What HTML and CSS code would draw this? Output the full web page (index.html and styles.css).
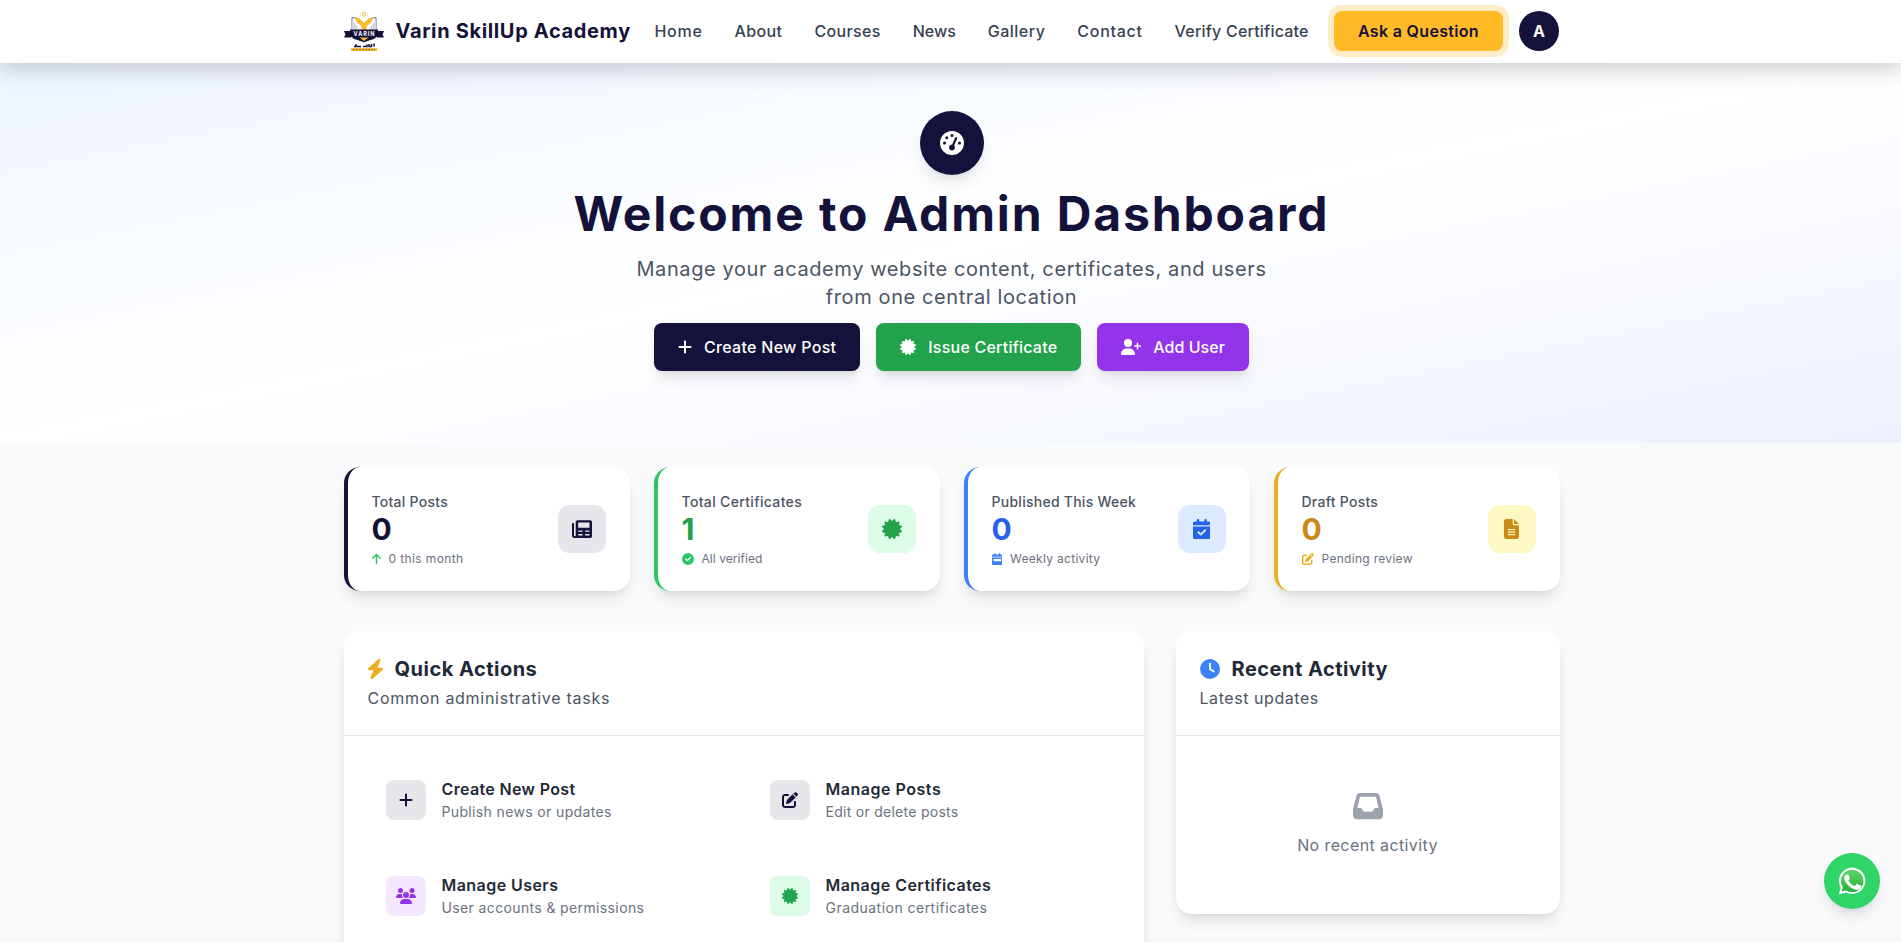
FILE: index.html
```html
<!DOCTYPE html>
<html lang="en">
<head>
<meta charset="utf-8">
<title>Varin SkillUp Academy</title>
<link rel="stylesheet" href="styles.css">
</head>
<body>
<svg class="defs" width="0" height="0" aria-hidden="true">
  <symbol id="i-plus" viewBox="0 0 448 512"><path d="M256 80c0-17.700-14.300-32-32-32s-32 14.300-32 32V224H48c-17.700 0-32 14.300-32 32s14.300 32 32 32H192V432c0 17.700 14.300 32 32 32s32-14.300 32-32V288H400c17.700 0 32-14.300 32-32s-14.300-32-32-32H256V80z"/></symbol>
  <symbol id="i-cert" viewBox="0 0 512 512"><path d="M211 7.300C205 1 196-1.400 187.600 .8s-14.900 8.900-17.100 17.300L154.700 80.600l-62-17.500c-8.400-2.400-17.400 0-23.500 6.100s-8.500 15.100-6.100 23.500l17.500 62L18.100 170.600c-8.400 2.100-15 8.700-17.300 17.100S1 205 7.300 211l46.200 45L7.300 301C1 307-1.400 316 .8 324.400s8.900 14.900 17.300 17.100l62.500 15.800-17.500 62c-2.400 8.400 0 17.400 6.100 23.500s15.100 8.500 23.500 6.100l62-17.500 15.800 62.500c2.100 8.400 8.700 15 17.100 17.300s17.300-.2 23.400-6.400l45-46.200 45 46.200c6.100 6.200 15 8.700 23.400 6.400s14.900-8.900 17.100-17.300l15.800-62.500 62 17.500c8.400 2.400 17.400 0 23.500-6.100s8.500-15.100 6.100-23.500l-17.500-62 62.500-15.800c8.400-2.100 15-8.700 17.300-17.100s-.2-17.400-6.400-23.400l-46.200-45 46.200-45c6.200-6.100 8.700-15 6.400-23.400s-8.900-14.900-17.300-17.100l-62.500-15.800 17.500-62c2.400-8.400 0-17.400-6.100-23.500s-15.100-8.500-23.500-6.100l-62 17.500L341.400 18.100c-2.100-8.400-8.700-15-17.100-17.300S307 1 301 7.300L256 53.500 211 7.300z"/></symbol>
  <symbol id="i-edit" viewBox="0 0 512 512"><path d="M471.600 21.700c-21.900-21.900-57.300-21.900-79.200 0L362.300 51.700l97.900 97.900 30.100-30.100c21.900-21.900 21.900-57.300 0-79.200L471.600 21.700zm-299.200 220c-6.100 6.100-10.800 13.600-13.500 21.900l-29.600 88.800c-2.900 8.600-.6 18.100 5.800 24.600s15.900 8.700 24.600 5.800l88.800-29.600c8.200-2.700 15.700-7.400 21.900-13.500L437.700 172.300 339.700 74.300 172.400 241.700zM96 64C43 64 0 107 0 160V416c0 53 43 96 96 96H352c53 0 96-43 96-96V320c0-17.700-14.300-32-32-32s-32 14.300-32 32v96c0 17.700-14.300 32-32 32H96c-17.700 0-32-14.300-32-32V160c0-17.700 14.300-32 32-32h96c17.700 0 32-14.300 32-32s-14.300-32-32-32H96z"/></symbol>
</svg>

<header class="topbar">
  <div class="wrap topbar-row">
    <a class="brand">
      <svg class="brand-logo" viewBox="0 0 40 40">
        <circle cx="20" cy="3.500" r="1.700" fill="none" stroke="#fdb827" stroke-width="1"/>
        <circle cx="20" cy="4" r="3.600" fill="none" stroke="#b5b6c6" stroke-width=".5" stroke-dasharray="1 1.400"/>
        <path d="M8 6.500C14 7 18 10 20 13.500 22 10 26 7 32 6.500V21H8z" fill="#fff" stroke="#4a4a6b" stroke-width=".8"/>
        <path d="M8 9l9 11.500H8zM32 9l-9 11.500h9z" fill="#d5d6e2"/>
        <path d="M11 6.500c4.500.3 7.500 2.800 9 6.500 1.500-3.700 4.500-6.200 9-6.500-.6 4-3.500 7-6.500 8.500V19h-5v-4C14.500 13.500 11.600 10.500 11 6.500z" fill="#fdb827"/>
        <path d="M8 26h24c-1 2.800-7 2.800-12 5.500C15 28.800 9 28.800 8 26z" fill="#14123a"/>
        <path d="M15.500 26.500h9L20 30z" fill="#fdb827"/>
        <path d="M0 20h6v-1.500h28V20h6l-1.500 3.500L40 26.500h-7V26H7v.5H0l1.500-3z" fill="#14123a"/>
        <text x="20" y="24.600" class="logo-name" textLength="21">VARIN</text>
        <path d="M10 35.500h7M19 35.500h4v-2M25 33v2.500h2.500V33M30 32.500v3M12 33v2.500" fill="none" stroke="#14123a" stroke-width="1.500"/>
        <path d="M7 37.200h26V40H7z" fill="#fdb827"/>
        <path d="M9 38.600h22" stroke="#7a5a24" stroke-width=".9" stroke-dasharray="2 1"/>
      </svg>
      <span class="brand-name">Varin SkillUp Academy</span>
    </a>
    <nav class="menu">
      <a class="m-home">Home</a><a class="m-about">About</a><a class="m-courses">Courses</a><a class="m-news">News</a><a class="m-gallery">Gallery</a><a class="m-contact">Contact</a><a class="m-verify">Verify Certificate</a>
    </nav>
    <a class="ask">Ask a Question</a>
    <span class="avatar">A</span>
  </div>
</header>

<main>
  <section class="hero">
    <div class="hero-badge"><svg viewBox="0 0 512 512"><path fill-rule="evenodd" d="M0 256a256 256 0 1 1 512 0A256 256 0 1 1 0 256zM288 96a32 32 0 1 0-64 0 32 32 0 1 0 64 0zM256 416c35.300 0 64-28.700 64-64c0-17.400-6.900-33.100-18.100-44.600L366 161.700c5.300-12.100-.2-26.300-12.300-31.600s-26.300 .2-31.600 12.300L257.900 288c-.6 0-1.300 0-1.900 0c-35.300 0-64 28.700-64 64s28.700 64 64 64zM176 144a32 32 0 1 0-64 0 32 32 0 1 0 64 0zM96 288a32 32 0 1 0 0-64 32 32 0 1 0 0 64zm352-32a32 32 0 1 0-64 0 32 32 0 1 0 64 0z"/></svg></div>
    <h1 class="hero-title">Welcome to Admin Dashboard</h1>
    <p class="hero-text">Manage your academy website content, certificates, and users<br>from one central location</p>
    <div class="hero-buttons">
      <a class="btn navy"><svg class="ic" viewBox="0 0 448 512"><use href="#i-plus"/></svg><span>Create New Post</span></a>
      <a class="btn green"><svg class="ic" viewBox="0 0 512 512"><use href="#i-cert"/></svg><span>Issue Certificate</span></a>
      <a class="btn purple"><svg class="ic" viewBox="0 0 640 512"><path d="M96 128a128 128 0 1 1 256 0A128 128 0 1 1 96 128zM0 482.300C0 383.800 79.800 304 178.300 304h91.400C368.200 304 448 383.800 448 482.300c0 16.400-13.300 29.700-29.700 29.700H29.700C13.300 512 0 498.700 0 482.300zM504 312V248H440c-13.300 0-24-10.700-24-24s10.700-24 24-24h64V136c0-13.300 10.700-24 24-24s24 10.700 24 24v64h64c13.300 0 24 10.700 24 24s-10.700 24-24 24H552v64c0 13.300-10.700 24-24 24s-24-10.700-24-24z"/></svg><span>Add User</span></a>
    </div>
  </section>

  <section class="wrap stats">
    <article class="stat stat-navy">
      <div class="stat-copy">
        <p class="stat-label">Total Posts</p>
        <p class="stat-value">0</p>
        <p class="stat-note"><svg class="ic up" viewBox="0 0 384 512"><path d="M214.600 41.400c-12.500-12.500-32.800-12.500-45.300 0l-160 160c-12.500 12.500-12.500 32.800 0 45.300s32.800 12.500 45.300 0L160 141.200V448c0 17.700 14.300 32 32 32s32-14.300 32-32V141.200L329.400 246.600c12.500 12.500 32.800 12.500 45.300 0s12.500-32.800 0-45.300l-160-160z"/></svg><span>0 this month</span></p>
      </div>
      <div class="stat-icon"><svg viewBox="0 0 20 20"><path fill-rule="evenodd" d="M5.500 1.200h12.700c1 0 1.800.8 1.800 1.800v14.200c0 1-.8 1.800-1.800 1.800H2.500A2.500 2.500 0 0 1 0 16.500V5c0-.6.400-1 1-1s1 .4 1 1v11.500c0 .5.300.8.800.8s.9-.3.900-.8V3c0-1 .8-1.800 1.800-1.800zM6.200 3.600v5.200h11.300V3.600zM6.200 11.400v1.300h4.400v-1.300zm6.900 0v1.300h4.400v-1.300zM6.200 15.100v1.300h4.400v-1.300zm6.900 0v1.300h4.400v-1.300z"/></svg></div>
    </article>
    <article class="stat stat-green">
      <div class="stat-copy">
        <p class="stat-label">Total Certificates</p>
        <p class="stat-value">1</p>
        <p class="stat-note"><svg class="ic" viewBox="0 0 512 512"><path d="M256 512A256 256 0 1 0 256 0a256 256 0 1 0 0 512zM369 209L241 337c-9.400 9.400-24.600 9.400-33.900 0l-64-64c-9.400-9.400-9.400-24.600 0-33.900s24.600-9.400 33.900 0l47 47L335 175c9.400-9.400 24.600-9.400 33.900 0s9.400 24.600 0 33.900z"/></svg><span>All verified</span></p>
      </div>
      <div class="stat-icon"><svg viewBox="0 0 512 512"><use href="#i-cert"/></svg></div>
    </article>
    <article class="stat stat-blue">
      <div class="stat-copy">
        <p class="stat-label">Published This Week</p>
        <p class="stat-value">0</p>
        <p class="stat-note"><svg class="ic" viewBox="0 0 448 512"><path fill-rule="evenodd" d="M128 0c17.700 0 32 14.300 32 32V64H288V32c0-17.700 14.300-32 32-32s32 14.300 32 32V64h48c26.500 0 48 21.500 48 48v48H0V112C0 85.500 21.500 64 48 64H96V32c0-17.700 14.300-32 32-32zM0 192H448V464c0 26.500-21.500 48-48 48H48c-26.500 0-48-21.500-48-48V192zm80 64c-8.800 0-16 7.200-16 16v64c0 8.800 7.200 16 16 16H368c8.800 0 16-7.200 16-16V272c0-8.800-7.200-16-16-16H80z"/></svg><span>Weekly activity</span></p>
      </div>
      <div class="stat-icon"><svg class="narrow" viewBox="0 0 448 512"><path d="M128 0c17.700 0 32 14.300 32 32V64H288V32c0-17.700 14.300-32 32-32s32 14.300 32 32V64h48c26.500 0 48 21.500 48 48v48H0V112C0 85.500 21.500 64 48 64H96V32c0-17.700 14.300-32 32-32zM0 192H448V464c0 26.500-21.500 48-48 48H48c-26.500 0-48-21.500-48-48V192zM329 305c9.400-9.400 9.400-24.600 0-33.900s-24.600-9.400-33.900 0l-95 95-47-47c-9.400-9.400-24.600-9.400-33.900 0s-9.400 24.600 0 33.900l64 64c9.400 9.400 24.600 9.400 33.900 0L329 305z"/></svg></div>
    </article>
    <article class="stat stat-yellow">
      <div class="stat-copy">
        <p class="stat-label">Draft Posts</p>
        <p class="stat-value">0</p>
        <p class="stat-note"><svg class="ic" viewBox="0 0 512 512"><use href="#i-edit"/></svg><span>Pending review</span></p>
      </div>
      <div class="stat-icon"><svg class="slim" viewBox="0 0 384 512"><path d="M64 0C28.700 0 0 28.700 0 64V448c0 35.300 28.700 64 64 64H320c35.300 0 64-28.700 64-64V160H256c-17.700 0-32-14.300-32-32V0H64zM256 0V128H384L256 0zM112 256H272c8.800 0 16 7.200 16 16s-7.200 16-16 16H112c-8.800 0-16-7.200-16-16s7.200-16 16-16zm0 64H272c8.800 0 16 7.200 16 16s-7.200 16-16 16H112c-8.800 0-16-7.200-16-16s7.200-16 16-16zm0 64H272c8.800 0 16 7.200 16 16s-7.200 16-16 16H112c-8.800 0-16-7.200-16-16s7.200-16 16-16z"/></svg></div>
    </article>
  </section>

  <section class="wrap panels">
    <div class="panel">
      <div class="panel-head">
        <h2 class="panel-title"><svg class="bolt" viewBox="32 0 384 512"><path d="M349.400 44.600c5.900-13.700 1.500-29.700-10.600-38.500s-28.600-8-39.900 1.800l-256 224c-10 8.800-13.600 22.900-8.900 35.300S50.700 288 64 288H175.500L98.600 467.400c-5.900 13.700-1.500 29.700 10.600 38.500s28.600 8 39.900-1.800l256-224c10-8.800 13.600-22.900 8.900-35.300s-16.600-20.700-30-20.700H272.500L349.400 44.600z"/></svg><span>Quick Actions</span></h2>
        <p class="panel-sub sub-tasks">Common administrative tasks</p>
      </div>
      <div class="actions">
        <a class="action a-create"><span class="tile tile-navy"><svg class="ic" viewBox="0 0 448 512"><use href="#i-plus"/></svg></span><span><strong>Create New Post</strong><small>Publish news or updates</small></span></a>
        <a class="action a-posts"><span class="tile tile-navy"><svg class="ic" viewBox="0 0 512 512"><use href="#i-edit"/></svg></span><span><strong>Manage Posts</strong><small>Edit or delete posts</small></span></a>
        <a class="action a-users"><span class="tile tile-purple"><svg class="ic" viewBox="0 0 640 512"><path d="M144 0a80 80 0 1 1 0 160A80 80 0 1 1 144 0zM512 0a80 80 0 1 1 0 160A80 80 0 1 1 512 0zM0 298.700C0 239.800 47.800 192 106.700 192h42.700c15.900 0 31 3.500 44.600 9.700c-1.300 7.200-1.900 14.700-1.900 22.300c0 38.200 16.800 72.500 43.300 96c-.2 0-.4 0-.7 0H21.300C9.600 320 0 310.400 0 298.700zM405.300 320c-.2 0-.4 0-.7 0c26.600-23.500 43.300-57.800 43.300-96c0-7.600-.7-15-1.900-22.300c13.600-6.300 28.700-9.700 44.600-9.700h42.700C592.200 192 640 239.800 640 298.700c0 11.800-9.600 21.300-21.300 21.300H405.300zM224 224a96 96 0 1 1 192 0 96 96 0 1 1-192 0zM128 485.300C128 411.700 187.700 352 261.300 352H378.700C452.300 352 512 411.700 512 485.300c0 14.700-11.900 26.700-26.700 26.700H154.700c-14.700 0-26.700-11.900-26.700-26.700z"/></svg></span><span><strong>Manage Users</strong><small>User accounts &amp; permissions</small></span></a>
        <a class="action a-certs"><span class="tile tile-green"><svg class="ic" viewBox="0 0 512 512"><use href="#i-cert"/></svg></span><span><strong>Manage Certificates</strong><small>Graduation certificates</small></span></a>
      </div>
    </div>
    <div class="panel">
      <div class="panel-head">
        <h2 class="panel-title"><svg class="clock" viewBox="0 0 512 512"><path d="M256 0a256 256 0 1 1 0 512A256 256 0 1 1 256 0zM232 120V256c0 8 4 15.500 10.700 20l96 64c11 7.400 25.900 4.400 33.300-6.700s4.400-25.900-6.700-33.300L280 243.200V120c0-13.300-10.700-24-24-24s-24 10.700-24 24z"/></svg><span>Recent Activity</span></h2>
        <p class="panel-sub sub-latest">Latest updates</p>
      </div>
      <div class="empty">
        <svg viewBox="0 0 512 512"><path d="M121 32C91.600 32 66 52 58.900 80.500L1.900 308.400C.6 313.500 0 318.700 0 323.900V416c0 35.300 28.700 64 64 64H448c35.300 0 64-28.700 64-64V323.900c0-5.200-.6-10.400-1.900-15.500l-57-227.900C446 52 420.400 32 391 32H121zm0 64H391l48 192H387.800c-12.100 0-23.200 6.800-28.600 17.700l-14.300 28.600c-5.400 10.800-16.500 17.700-28.600 17.700H195.800c-12.100 0-23.200-6.800-28.600-17.700l-14.300-28.600c-5.400-10.800-16.500-17.700-28.600-17.700H73L121 96z"/></svg>
        <p>No recent activity</p>
      </div>
    </div>
  </section>
</main>

<a class="chat" aria-label="Chat">
  <svg viewBox="0 0 28 28">
    <defs><linearGradient id="wa" x1="0" y1="0" x2="0" y2="1"><stop offset="0" stop-color="#60d669"/><stop offset="1" stop-color="#22b038"/></linearGradient></defs>
    <path d="M.8 27.400l1.900-7A13.200 13.200 0 1 1 8 25.500z" fill="#fff"/>
    <path d="M3.600 24.600l1.300-4.500A11.200 11.200 0 1 1 8.300 23.400z" fill="url(#wa)"/>
    <path d="M10.600 8c-.3-.6-.6-.6-1-.6h-.8c-.3 0-.7.100-1.100.5s-1.500 1.400-1.500 3.400 1.500 4 1.700 4.300 2.900 4.600 7.100 6.200c3.500 1.400 4.200 1.100 5 1s2.500-1 2.800-2c.3-1 .3-1.800.2-2s-.4-.3-.8-.5-2.500-1.200-2.800-1.400-.7-.2-.9.200-1.100 1.400-1.300 1.600-.5.300-.9.100-1.800-.7-3.400-2.100c-1.200-1.100-2.100-2.500-2.300-2.900s0-.6.200-.8l.6-.7.400-.7c.1-.3.100-.5 0-.7z" fill="#fff"/>
  </svg>
</a>
</body>
</html>
```
FILE: styles.css
```css
* { box-sizing: border-box; }
html { overflow: hidden; }
body {
  margin: 0;
  width: 1903px;
  height: 942px;
  overflow: hidden;
  background: #f9fafb;
  color: #1f2937;
  font-family: Inter, "Open Sans", sans-serif;
  font-size: 16px;
  line-height: 24px;
}
h1, h2, p { margin: 0; }
svg { display: block; flex: none; fill: currentColor; }
.defs { position: absolute; }
.ic { height: 16px; width: auto; }
.wrap { width: 1216px; margin: 0 auto; }

.topbar {
  position: relative;
  z-index: 5;
  height: 63px;
  background: #fff;
  box-shadow: 0 6px 24px rgba(0, 0, 0, .2);
}
.topbar-row { display: flex; align-items: center; height: 62px; }
.brand { display: flex; align-items: center; gap: 12px; width: 311px; }
.brand-logo { width: 40px; height: 40px; }
.logo-name { font: 700 5.500px Inter, sans-serif; fill: #fff; text-anchor: middle; }
.brand-name { color: #14123a; font-size: 20px; font-weight: 700; line-height: 28px; letter-spacing: .65px; white-space: nowrap; }
.menu { display: flex; gap: 32px; width: 679.500px; padding-bottom: 1px; color: #374151; font-weight: 500; white-space: nowrap; }
.m-home { letter-spacing: .7px; }
.m-about { letter-spacing: .4px; }
.m-courses { letter-spacing: .34px; }
.m-news { letter-spacing: 0; }
.m-gallery { letter-spacing: .48px; }
.m-contact { letter-spacing: .7px; }
.m-verify { letter-spacing: .22px; }
.ask {
  display: flex;
  align-items: center;
  justify-content: center;
  width: 169px;
  height: 40px;
  padding-bottom: 1px;
  border-radius: 8px;
  background: #ffba26;
  box-shadow: 0 0 0 6px #ffedc8;
  color: #14123a;
  font-weight: 600;
  letter-spacing: .325px;
  white-space: nowrap;
}
.avatar {
  display: grid;
  place-items: center;
  width: 40px;
  height: 40px;
  margin-left: 16px;
  padding-bottom: 1px;
  border-radius: 50%;
  background: #14123a;
  color: #fff;
  font-weight: 700;
}

.hero {
  height: 380px;
  padding-top: 48px;
  background: linear-gradient(to bottom right, #eff6ff, #fff, #eef2ff);
  text-align: center;
}
.hero-badge {
  display: grid;
  place-items: center;
  width: 64px;
  height: 64px;
  margin: 0 auto;
  border-radius: 50%;
  background: #14123a;
  color: #fff;
  box-shadow: 0 10px 15px -3px rgba(0, 0, 0, .1), 0 4px 6px -4px rgba(0, 0, 0, .1);
}
.hero-badge svg { width: 24px; height: 24px; }
.hero-title { margin-top: 15px; color: #14123a; font-size: 48px; line-height: 48px; font-weight: 700; letter-spacing: 1.870px; white-space: nowrap; }
.hero-text { margin-top: 17px; color: #4b5563; font-size: 20px; line-height: 28px; letter-spacing: .6px; }
.hero-buttons { display: flex; justify-content: center; gap: 16px; margin-top: 12px; }
.btn {
  display: flex;
  align-items: center;
  gap: 12px;
  height: 48px;
  padding: 0 24px;
  border-radius: 8px;
  color: #fff;
  font-weight: 500;
  white-space: nowrap;
  box-shadow: 0 10px 15px -3px rgba(0, 0, 0, .1), 0 4px 6px -4px rgba(0, 0, 0, .1);
}
.btn span { padding-bottom: 1px; }
.navy { background: #14123a; letter-spacing: .29px; }
.green { background: #22a34b; letter-spacing: .22px; }
.purple { background: #9333ea; letter-spacing: .04px; }

.stats { display: grid; grid-template-columns: repeat(4, 1fr); gap: 24px; margin-top: 24px; }
.stat {
  display: flex;
  align-items: center;
  justify-content: space-between;
  height: 124px;
  padding: 0 24px;
  border-left: 4px solid;
  border-radius: 16px;
  background: #fff;
  box-shadow: 0 10px 15px -3px rgba(0, 0, 0, .1), 0 4px 6px -4px rgba(0, 0, 0, .1);
}
.stat-label { color: #4b5563; font-size: 14px; line-height: 20px; font-weight: 500; letter-spacing: .26px; }
.stat-value { margin: -1px 0 1px; font-size: 30px; line-height: 36px; font-weight: 700; }
.stat-note { display: flex; align-items: center; gap: 8px; margin-top: 4px; font-size: 12px; line-height: 16px; letter-spacing: .3px; }
.stat-note .ic { height: 12px; }
.stat-note span { color: #6b7280; }
.stat-icon { display: grid; place-items: center; width: 48px; height: 48px; border-radius: 12px; }
.stat-icon svg { width: 20px; height: 20px; }
.stat-icon svg.narrow { width: 17.500px; }
.stat-icon svg.slim { width: 15px; }
.stat-navy { border-color: #14123a; }
.stat-navy .stat-value { color: #14123a; }
.stat-navy .stat-icon { background: #e7e7eb; color: #14123a; }
.stat-navy .stat-note { letter-spacing: .38px; }
.stat-green { border-color: #2dc665; }
.stat-green .stat-label { letter-spacing: .34px; }
.stat-green .stat-value { color: #22a34b; }
.stat-green .stat-note { letter-spacing: .06px; }
.stat-green .stat-icon { background: #dcfce7; color: #22a34b; }
.stat-navy .stat-note, .stat-green .stat-note { color: #2dc665; }
.stat-blue { border-color: #3b82f6; }
.stat-blue .stat-value { color: #2563eb; }
.stat-blue .stat-note { color: #3b82f6; }
.stat-blue .stat-icon { background: #dbeafe; color: #2563eb; }
.stat-yellow { border-color: #eab022; }
.stat-yellow .stat-value { color: #ca8a18; }
.stat-yellow .stat-note { color: #eab022; }
.stat-yellow .stat-icon { background: #fef9c3; color: #ca8a18; }

.panels { display: grid; grid-template-columns: 800px 384px; gap: 32px; align-items: start; margin-top: 40px; }
.panel {
  border-radius: 16px;
  background: #fff;
  box-shadow: 0 10px 15px -3px rgba(0, 0, 0, .1), 0 4px 6px -4px rgba(0, 0, 0, .1);
}
.panel-head { height: 105px; padding: 24px; border-bottom: 1px solid #e5e7eb; }
.panel-title { display: flex; align-items: center; gap: 12px; font-size: 20px; line-height: 28px; font-weight: 700; letter-spacing: .49px; }
.panel-title svg { height: 20px; }
.bolt { width: 15px; color: #eab022; }
.clock { width: 20px; color: #3b82f6; }
.panel-sub { margin-top: 3px; color: #4b5563; }
.sub-tasks { letter-spacing: .72px; }
.sub-latest { letter-spacing: .56px; }
.actions { display: grid; grid-template-columns: 1fr 1fr; gap: 16px; padding: 24px; }
.action { display: flex; align-items: center; gap: 16px; height: 80px; padding: 0 18px; white-space: nowrap; }
.action strong { display: block; margin: -1px 0 1px; font-weight: 600; }
.action small { display: block; color: #6b7280; font-size: 14px; line-height: 20px; }
.a-create strong { letter-spacing: .34px; }
.a-create small { letter-spacing: .36px; }
.a-posts strong { letter-spacing: .52px; }
.a-posts small { letter-spacing: .27px; }
.a-users strong { letter-spacing: .44px; }
.a-users small { letter-spacing: .37px; }
.a-certs strong { letter-spacing: .46px; }
.a-certs small { letter-spacing: .47px; }
.tile { display: grid; place-items: center; width: 40px; height: 40px; border-radius: 8px; }
.tile-navy { background: #e7e7eb; color: #14123a; }
.tile-purple { background: #f3e8ff; color: #9333ea; }
.tile-green { background: #dcfce7; color: #22a34b; }
.empty { display: flex; flex-direction: column; align-items: center; height: 178px; padding-top: 55px; color: #6b7280; }
.empty svg { width: 30px; height: 30px; color: #9ca3af; }
.empty p { margin-top: 12px; letter-spacing: .4px; }

.chat {
  position: absolute;
  left: 1824px;
  top: 853px;
  display: grid;
  place-items: center;
  width: 56px;
  height: 56px;
  border-radius: 50%;
  background: #2fd566;
  box-shadow: 0 10px 15px -3px rgba(0, 0, 0, .1), 0 4px 6px -4px rgba(0, 0, 0, .1);
}
.chat svg { width: 28px; height: 28px; }
```
